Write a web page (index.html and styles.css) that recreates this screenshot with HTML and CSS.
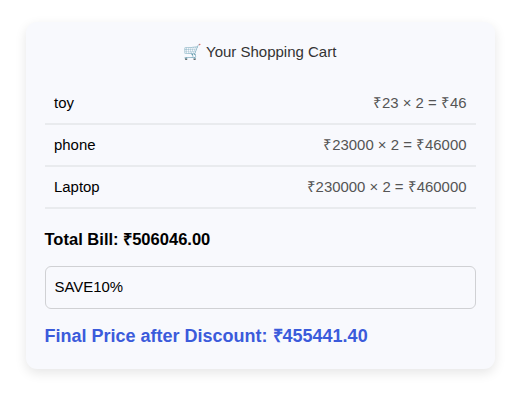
FILE: index.html
```html
<!DOCTYPE html>
<html lang="en">
<head>
<meta charset="utf-8">
<title>Your Shopping Cart</title>
<link rel="stylesheet" href="styles.css">
</head>
<body>
<main class="cart">
  <h2 class="title">🛒 Your Shopping Cart</h2>
  <ul class="items">
    <li class="item"><span>toy</span><span class="price">₹23 × 2 = ₹46</span></li>
    <li class="item"><span>phone</span><span class="price">₹23000 × 2 = ₹46000</span></li>
    <li class="item"><span>Laptop</span><span class="price">₹230000 × 2 = ₹460000</span></li>
  </ul>
  <p class="total">Total Bill: ₹506046.00</p>
  <input class="coupon" type="text" value="SAVE10%">
  <p class="final">Final Price after Discount: ₹455441.40</p>
</main>
</body>
</html>
```

FILE: styles.css
```css
* { box-sizing: border-box; margin: 0; padding: 0; }
body { min-height: 401px; padding: 22px 0 0 25.5px; background: #fff; font-family: "Liberation Sans", Arial, sans-serif; font-size: 14.93px; color: #000; }
.cart { width: 469.5px; height: 347px; padding: 18px 19px 19px; background: #f8f9fd; border-radius: 11px; box-shadow: 0 4px 12px rgba(0, 0, 0, 0.1); }
.title { height: 24px; padding-right: 1px; line-height: 24px; font-size: 15px; font-weight: 400; text-align: center; color: #333; }
.items { list-style: none; margin-top: 19px; }
.item { display: flex; justify-content: space-between; align-items: center; height: 42px; padding: 0 9.5px; border-bottom: 2px solid #e9ebee; line-height: 18px; }
.price { color: #555; }
.total { margin-top: 21px; font-size: 16.55px; line-height: 20px; font-weight: 700; }
.coupon { display: block; width: 100%; height: 43px; margin-top: 16px; padding: 0 9px 2px; font: inherit; background: transparent; border: 1px solid #d0d1d4; border-radius: 6px; }
.final { margin-top: 17px; font-size: 18px; line-height: 20px; font-weight: 700; color: #3b5bdb; }
```
